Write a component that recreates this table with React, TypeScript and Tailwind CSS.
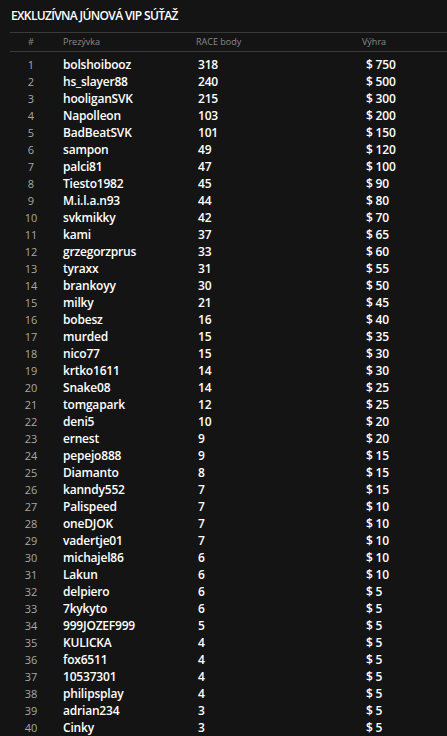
import React from "react";

const rows: [string, number, number][] = [
  ["bolshoibooz", 318, 750],
  ["hs_slayer88", 240, 500],
  ["hooliganSVK", 215, 300],
  ["Napolleon", 103, 200],
  ["BadBeatSVK", 101, 150],
  ["sampon", 49, 120],
  ["palci81", 47, 100],
  ["Tiesto1982", 45, 90],
  ["M.i.l.a.n93", 44, 80],
  ["svkmikky", 42, 70],
  ["kami", 37, 65],
  ["grzegorzprus", 33, 60],
  ["tyraxx", 31, 55],
  ["brankoyy", 30, 50],
  ["milky", 21, 45],
  ["bobesz", 16, 40],
  ["murded", 15, 35],
  ["nico77", 15, 30],
  ["krtko1611", 14, 30],
  ["Snake08", 14, 25],
  ["tomgapark", 12, 25],
  ["deni5", 10, 20],
  ["ernest", 9, 20],
  ["pepejo888", 9, 15],
  ["Diamanto", 8, 15],
  ["kanndy552", 7, 15],
  ["Palispeed", 7, 10],
  ["oneDJOK", 7, 10],
  ["vadertje01", 7, 10],
  ["michajel86", 6, 10],
  ["Lakun", 6, 10],
  ["delpiero", 6, 5],
  ["7kykyto", 6, 5],
  ["999JOZEF999", 5, 5],
  ["KULICKA", 4, 5],
  ["fox6511", 4, 5],
  ["10537301", 4, 5],
  ["philipsplay", 4, 5],
  ["adrian234", 3, 5],
  ["Cinky", 3, 5],
];

export default function App() {
  return (
    <div
      className="w-[447px] h-[736px] overflow-hidden bg-[#141414] text-white pl-[10px]"
      style={{ fontFamily: '"Open Sans", "Noto Sans", sans-serif' }}
    >
      <div className="pt-[8px] pl-[1px] h-[32px] text-[12px] leading-[16px] font-semibold tracking-[-0.65px]">
        EXKLUZÍVNA JÚNOVÁ VIP SÚŤAŽ
      </div>
      <div className="border-t border-b border-[#3a3a3a] h-[20px] grid grid-cols-[42px_133px_166px_1fr] items-center text-[9px] text-[#8a8a8a]">
        <div className="text-center">#</div>
        <div className="pl-[11px]">Prezývka</div>
        <div className="pl-[11px]">RACE body</div>
        <div className="pl-[11px]">Výhra</div>
      </div>
      <div className="pt-[4px]">
        {rows.map(([name, pts, prize], i) => (
          <div
            key={i}
            className="grid grid-cols-[42px_133px_166px_1fr] h-[17px] items-center leading-[17px]"
          >
            <div className="text-center text-[11px] text-[#a8a8a8]">{i + 1}</div>
            <div className="pl-[11px] text-[12px] font-semibold tracking-[-0.2px]">{name}</div>
            <div className="pl-[13px] text-[12px] font-semibold tracking-[-0.2px]">{pts}</div>
            <div className="pl-[15px] text-[12px] font-semibold tracking-[-0.2px]">$ {prize}</div>
          </div>
        ))}
      </div>
    </div>
  );
}
